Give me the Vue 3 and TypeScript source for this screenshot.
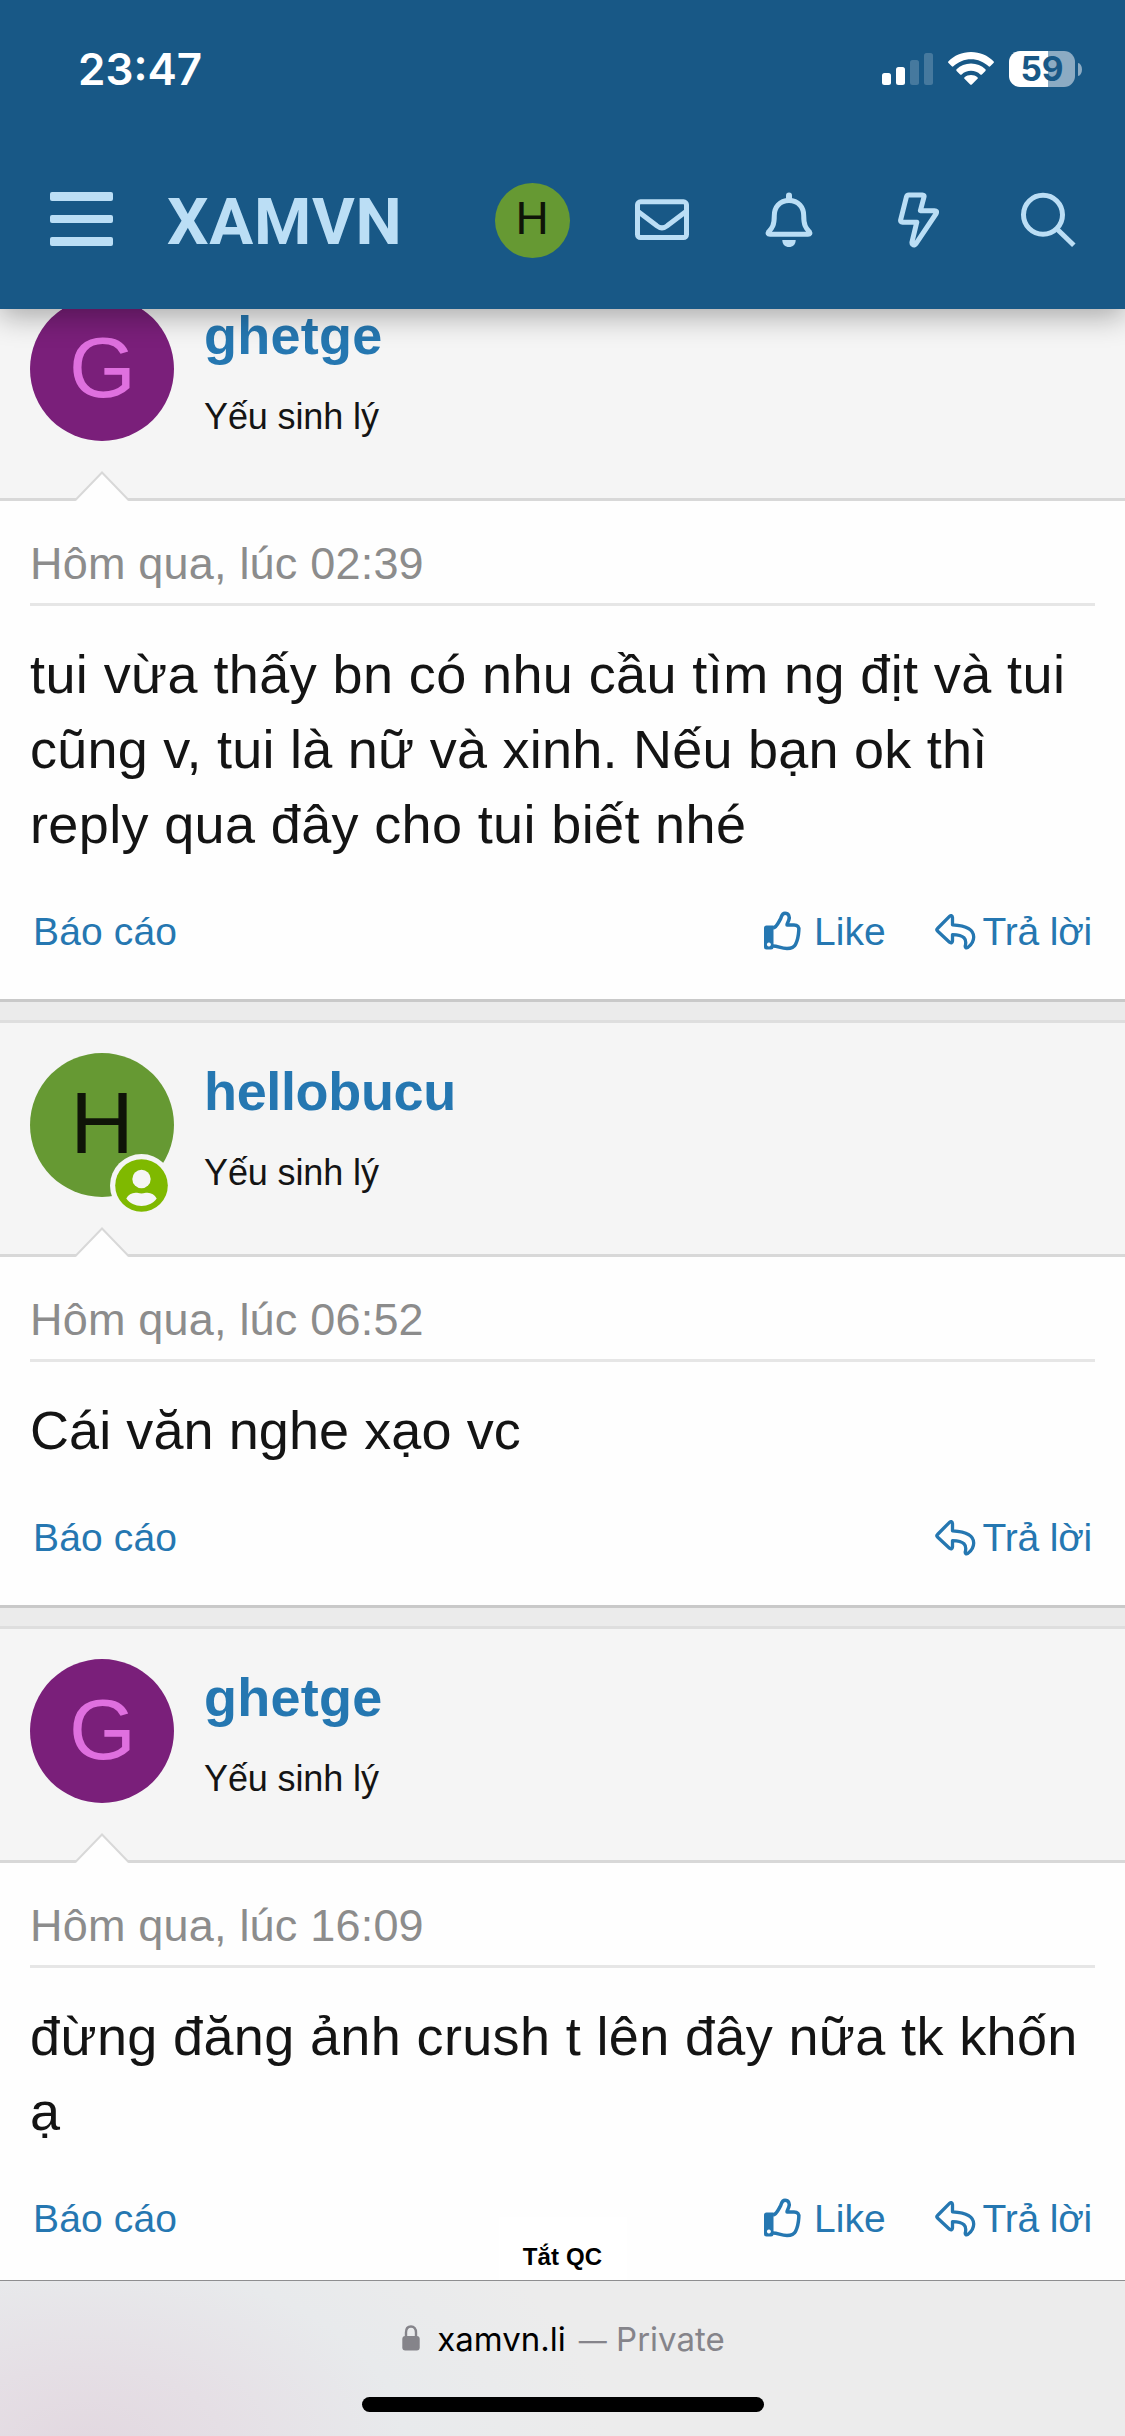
<script setup lang="ts">
interface Post {
  id: number
  initial: string
  tone: 'plum' | 'leaf'
  user: string
  userFit: string
  online: boolean
  date: string
  lines: { text: string; fit: string }[]
  like: boolean
}

const posts: Post[] = [
  {
    id: 1,
    initial: 'G',
    tone: 'plum',
    user: 'ghetge',
    userFit: '0.25px',
    online: false,
    date: 'Hôm qua, lúc 02:39',
    lines: [
      { text: 'tui vừa thấy bn có nhu cầu tìm ng địt và tui', fit: '0.4px' },
      { text: 'cũng v, tui là nữ và xinh. Nếu bạn ok thì', fit: '0.24px' },
      { text: 'reply qua đây cho tui biết nhé', fit: '0.36px' },
    ],
    like: true,
  },
  {
    id: 2,
    initial: 'H',
    tone: 'leaf',
    user: 'hellobucu',
    userFit: '-0.35px',
    online: true,
    date: 'Hôm qua, lúc 06:52',
    lines: [{ text: 'Cái văn nghe xạo vc', fit: '0.08px' }],
    like: false,
  },
  {
    id: 3,
    initial: 'G',
    tone: 'plum',
    user: 'ghetge',
    userFit: '0.25px',
    online: false,
    date: 'Hôm qua, lúc 16:09',
    lines: [
      { text: 'đừng đăng ảnh crush t lên đây nữa tk khốn', fit: '0.36px' },
      { text: 'ạ', fit: '0' },
    ],
    like: true,
  },
]
</script>

<template>
  <div class="screen">
    <header class="top">
      <div class="status">
        <span class="clock">23:47</span>
        <div class="indicators">
          <svg class="signal" width="51" height="32" viewBox="0 0 51 32" fill="#fff">
            <rect x="0" y="20" width="9" height="12" rx="2.5" />
            <rect x="14" y="14" width="9" height="18" rx="2.5" />
            <rect x="28" y="7" width="9" height="25" rx="2.5" opacity=".2" />
            <rect x="42" y="0" width="9" height="32" rx="2.5" opacity=".2" />
          </svg>
          <svg class="wifi" width="46" height="33" viewBox="0 0 46 33" fill="#fff">
            <path d="M23 0C32 0 40 3.600 45.500 9.300q.8.900 0 1.700L42.200 14.300q-.8.700-1.600 0C36 9.900 29.800 7.200 23 7.200S10 9.900 5.400 14.300q-.8.700-1.600 0L.5 11q-.8-.8 0-1.700C6 3.600 14 0 23 0Z" />
            <path d="M23 11.500c5.600 0 10.700 2.200 14.400 5.800q.8.800 0 1.600l-3.500 3.500q-.8.700-1.600 0C29.900 20.200 26.600 18.800 23 18.800s-6.900 1.400-9.300 3.600q-.8.700-1.600 0L8.600 18.900q-.8-.8 0-1.600C12.300 13.700 17.400 11.500 23 11.500Z" />
            <path d="M23 22.900c2.500 0 4.700.9 6.400 2.300q.9.800.1 1.600L23.800 32.500q-.8.700-1.600 0L16.500 26.800q-.8-.8.1-1.600C18.300 23.800 20.500 22.900 23 22.900Z" />
          </svg>
          <div class="battery"><span>59</span></div>
          <div class="nub"></div>
        </div>
      </div>
      <nav class="bar">
        <div class="burger"><i></i><i></i><i></i></div>
        <span class="brand">XAMVN</span>
        <span class="mini">H</span>
        <svg class="glyph mail" width="54" height="56" viewBox="635 192 54 56">
          <rect x="637.500" y="201.800" width="49" height="35.700" rx="3" />
          <path d="M638 211.500L656.500 225.600Q662 230 667.500 225.600L686 211.500" />
        </svg>
        <svg class="glyph bell" width="48" height="56" viewBox="764.500 192 48 56">
          <path d="M788.500 200.500C779 200.500 773.800 207.500 773.800 215.500C773.800 226.500 771 228.500 768.200 231.600Q766.600 234.300 769.500 234.300H807.500Q810.400 234.300 808.800 231.600C806 228.500 803.200 226.500 803.200 215.500C803.200 207.500 798 200.500 788.500 200.500Z" />
          <path d="M788.500 195.500V200" stroke-width="6" stroke-linecap="round" />
          <path class="solid" d="M781.800 240H795.200C795.200 244.500 792.300 247 788.500 247S781.800 244.500 781.800 240Z" />
        </svg>
        <svg class="glyph bolt" width="42" height="56" viewBox="898 192 42 56">
          <path d="M908.800 195H922.500Q924.500 195 924 197L920.400 210.700H934.500Q937.500 210.700 936.200 213.500L916 243.700Q914.400 246 912.700 244.500Q911.700 243.500 912 242L916.800 222.200H902.500Q900.300 222.200 900.600 220L906.400 197Q906.900 195 908.800 195Z" />
        </svg>
        <svg class="glyph search" width="55" height="56" viewBox="1020.500 192 55 56">
          <circle cx="1042.500" cy="214.700" r="19.500" />
          <path d="M1057 229.500L1073.300 245.200" />
        </svg>
      </nav>
    </header>

    <main class="thread">
      <article v-for="post in posts" :key="post.id" class="post">
        <section class="author">
          <div class="avatar" :class="post.tone">
            <span>{{ post.initial }}</span>
            <svg v-if="post.online" class="online" width="63" height="63" viewBox="0 0 63 63">
              <circle cx="31.500" cy="31.500" r="31.500" fill="#f5f5f5" />
              <circle cx="31.500" cy="31.500" r="26.300" fill="#7fb900" />
              <circle cx="31.500" cy="25" r="9.200" fill="#f5f5f5" />
              <path d="M16.300 44.500C18.300 41 21.500 38.800 25.500 38.800C28 38.800 28.500 39.500 31.500 39.500S35 38.800 37.500 38.800C41.500 38.800 44.700 41 46.700 44.500C43.300 49.200 37.700 52 31.500 52S19.700 49.200 16.300 44.500Z" fill="#f5f5f5" />
            </svg>
          </div>
          <div class="who">
            <a class="name" :style="{ letterSpacing: post.userFit }">{{ post.user }}</a>
            <span class="rank">Yếu sinh lý</span>
          </div>
          <svg class="notch" width="54" height="30" viewBox="0 0 54 30">
            <path d="M0 30L27 1L54 30Z" fill="#fefefe" />
            <path d="M0 29.500L27 1.500L54 29.500" fill="none" stroke="#d8d8d8" stroke-width="2" />
          </svg>
        </section>
        <section class="content">
          <time class="date">{{ post.date }}</time>
          <div class="text">
            <div v-for="line in post.lines" :key="line.text" :style="{ letterSpacing: line.fit }">{{ line.text }}</div>
          </div>
          <footer class="actions">
            <a class="report">Báo cáo</a>
            <a v-if="post.like" class="like">
              <svg width="38" height="40" viewBox="44 30.500 38 40">
                <path fill-rule="evenodd" fill="currentColor" d="M46.500 45H53.500V66.500Q53.500 69 51 69H46.500Q44 69 44 66.500V47.500Q44 45 46.500 45ZM48.900 62a2 2 0 1 0 .01 0Z" />
                <path fill="none" stroke="currentColor" stroke-width="3.500" stroke-linejoin="round" d="M53 47.500C57 46.500 58.500 41.500 60.500 38.500C61.500 36.500 61.500 32.700 65 32.700C68.800 32.700 70 36.500 68.800 39.500C68 42 67 42.800 67 44.500H74C77.500 44.500 79.300 46.500 78.800 50C78.500 55 77.500 60 75.500 64C74 67 71 68 67 68C61 68 58 65.500 53 65.500" />
              </svg>
              <span>Like</span>
            </a>
            <a class="reply">
              <svg width="41" height="36" viewBox="214.500 34 41 36">
                <path fill="none" stroke="currentColor" stroke-width="3.300" stroke-linejoin="round" d="M217 48.500L229 36.300Q231.800 34.500 232 37.500V44.800C246 45.500 253.200 49.500 253.200 57C253.200 61.500 250.500 65 247.500 67.300C245.500 68.500 244.300 67.500 244.900 65.500C246.300 59 244 55 232 54.600V61Q231.800 64 229 62.200L217 51Q215.500 49.800 217 48.500Z" />
              </svg>
              <span>Trả lời</span>
            </a>
          </footer>
        </section>
      </article>
      <div class="adoff">Tắt QC</div>
    </main>

    <div class="browser">
      <div class="address">
        <svg width="18" height="26" viewBox="0 0 18 26">
          <path d="M4 13V7.500C4 3.800 6 1.500 9 1.500S14 3.800 14 7.500V13" fill="none" stroke="#85848a" stroke-width="2.400" />
          <rect x="0.300" y="11" width="17.400" height="14.500" rx="3" fill="#85848a" />
        </svg>
        <span class="host">xamvn.li</span>
        <span class="private"><span class="dash">—</span> Private</span>
      </div>
      <div class="home"></div>
    </div>
  </div>
</template>

<style>
body {
  margin: 0;
}
</style>

<style scoped>
.screen {
  width: 1125px;
  height: 2436px;
  display: flex;
  flex-direction: column;
  overflow: hidden;
  background: #fefefe;
  color: #141414;
  font-family: "Liberation Sans", Arial, sans-serif;
  white-space: nowrap;
}
.top {
  position: relative;
  z-index: 2;
  height: 309px;
  flex: none;
  background: #185886;
  box-shadow: 0 7px 28px rgba(0, 0, 0, 0.32);
}
.status {
  display: flex;
  height: 132px;
  justify-content: space-between;
  padding: 0 43px 0 78px;
}
.clock {
  font: 600 44px/60px Inter, sans-serif;
  color: #fff;
  margin-top: 39px;
}
.indicators {
  display: flex;
  align-items: flex-start;
}
.signal {
  margin-top: 53px;
}
.wifi {
  margin: 52px 15px 0;
}
.battery {
  width: 66px;
  height: 36px;
  margin-top: 51px;
  border-radius: 11px;
  background: linear-gradient(90deg, #fff 39px, #8cabc3 39px);
  color: #185886;
  font: 700 33.500px/37px Inter, sans-serif;
  text-align: center;
}
.nub {
  width: 4px;
  height: 13px;
  margin: 63px 0 0 3px;
  border-radius: 0 4px 4px 0 / 0 6.500px 6.500px 0;
  background: #8cabc3;
}
.bar {
  display: flex;
  height: 177px;
  color: #bbdef5;
}
.burger {
  display: flex;
  flex-direction: column;
  gap: 14px;
  width: 63px;
  margin: 60px 0 0 50px;
}
.burger i {
  height: 8.500px;
  border-radius: 2px;
  background: #bbdef5;
}
.brand {
  width: 327.500px;
  margin: 50px 0 0 54px;
  font: 700 65.500px/80px Roboto, sans-serif;
  letter-spacing: 0.7px;
}
.mini {
  width: 75px;
  height: 75px;
  margin-top: 51px;
  border-radius: 50%;
  background: #669933;
  color: #0f1408;
  font-size: 46px;
  line-height: 71px;
  text-align: center;
}
.glyph {
  margin-top: 60px;
  fill: none;
  stroke: #bbdef5;
  stroke-width: 5px;
  stroke-linejoin: round;
}
.glyph .solid {
  fill: #bbdef5;
  stroke: none;
}
.mail {
  margin-left: 65.500px;
}
.bell {
  margin-left: 75.500px;
}
.bolt {
  margin-left: 85.500px;
}
.search {
  margin-left: 80.500px;
}
.thread {
  position: relative;
  height: 1971px;
  flex: none;
  overflow: hidden;
}
.post {
  border-top: 3px solid #dedede;
  border-bottom: 3px solid #c9c9c9;
  background: #fefefe;
}
.post:first-child {
  margin-top: -45px;
}
.post + .post {
  box-shadow: 0 -18px 0 #ebebeb;
  margin-top: 18px;
}
.author {
  position: relative;
  display: flex;
  height: 201px;
  padding: 30px 30px 0;
  gap: 30px;
  background: #f5f5f5;
  border-bottom: 3px solid #d8d8d8;
}
.avatar {
  position: relative;
  width: 144px;
  height: 144px;
  border-radius: 50%;
  font-size: 88px;
  line-height: 140px;
  text-align: center;
}
.plum {
  box-sizing: border-box;
  padding-left: 1px;
  font-size: 86px;
  background: #7a1f7a;
  color: #df70df;
}
.leaf {
  background: #669933;
  color: #0f1408;
}
.online {
  position: absolute;
  left: 79.500px;
  top: 101px;
}
.who {
  display: flex;
  flex-direction: column;
  gap: 25px;
  padding-top: 5px;
}
.name {
  font-size: 54px;
  line-height: 66px;
  font-weight: 700;
  color: #2577b1;
}
.rank {
  font-size: 36px;
  line-height: 48px;
  letter-spacing: -0.12px;
}
.notch {
  position: absolute;
  left: 75px;
  bottom: -3px;
}
.content {
  padding: 33px 30px 40px;
}
.date {
  display: block;
  padding-bottom: 9px;
  border-bottom: 3px solid #e6e6e6;
  font-size: 45px;
  line-height: 60px;
  letter-spacing: 0.2px;
  color: #8c8c8c;
}
.text {
  margin-top: 31px;
  font-size: 54px;
  line-height: 75px;
}
.actions {
  display: flex;
  height: 54px;
  margin-top: 43px;
  padding: 0 3px;
  font-size: 39px;
  line-height: 54px;
  color: #2577b1;
}
.report {
  margin-right: auto;
  letter-spacing: 0.15px;
}
.like,
.reply {
  display: flex;
}
.like svg {
  margin: 6px 12px 0 0;
}
.like {
  margin-right: 49px;
}
.reply {
  letter-spacing: -0.2px;
}
.reply svg {
  margin: 9px 7px 0 0;
}
.adoff {
  position: absolute;
  left: 499px;
  bottom: 0;
  width: 128px;
  height: 63px;
  background: #fff;
  color: #000;
  font-size: 24px;
  line-height: 80px;
  font-weight: 700;
  letter-spacing: 0.15px;
  text-align: center;
  text-indent: -1px;
}
.browser {
  display: flex;
  flex-direction: column;
  align-items: center;
  box-sizing: border-box;
  height: 156px;
  border-top: 1px solid #8e8e90;
  background: radial-gradient(ellipse 400px 230px at 85px 165px, #e2d8e0 0, #e5dfe5 35%, #e8eaec 80%, rgba(236, 236, 236, 0) 130%), #ececec;
}
.address {
  display: flex;
  height: 40px;
  margin-top: 38px;
  padding-left: 2px;
  font: 400 33px/40px Inter, sans-serif;
}
.address svg {
  margin: 6px 17px 0 0;
}
.host {
  color: #000;
  margin-right: 13px;
}
.private {
  color: #85848a;
}
.dash {
  display: inline-block;
  font-size: 28px;
  line-height: 40px;
}
.home {
  width: 402px;
  height: 15px;
  margin-top: 38px;
  border-radius: 8px;
  background: #000;
}
</style>
